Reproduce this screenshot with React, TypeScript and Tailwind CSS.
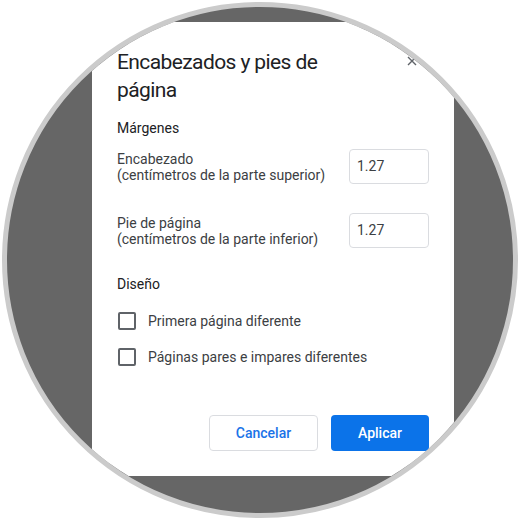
import React from "react";

function Checkbox() {
  return <div className="w-[18px] h-[18px] rounded-[2px] border-2 border-[#5f6368] bg-white shrink-0" />;
}

export default function App() {
  return (
    <div className="w-[520px] h-[520px] bg-white p-[2px]" style={{ fontFamily: "Roboto, 'Liberation Sans', sans-serif" }}>
      <div className="w-[516px] h-[516px] rounded-full border-[5px] border-[#cbcbcb] bg-[#666666] overflow-hidden">
        <div className="ml-[85px] mt-[15px] w-[362px] bg-white pt-[26px] pb-[25px] pl-[25px] pr-[25px] flex flex-col">
          <div className="flex items-start">
            <div className="flex-1 text-[21px] leading-[28px] tracking-[-0.6px] font-normal text-[#202124]">
              Encabezados y pies de
              <br />
              página
            </div>
            <div className="w-[24px] h-[24px] flex items-center justify-center mt-[1px] mr-[5px]">
              <svg width="10" height="10" viewBox="0 0 10 10">
                <path d="M1 1 L9 9 M9 1 L1 9" stroke="#5f6368" strokeWidth="1.4" fill="none" />
              </svg>
            </div>
          </div>
          <div className="mt-[14px] text-[14px] leading-[20px] font-normal text-[#202124]">Márgenes</div>
          <div className="mt-[11px] flex items-center justify-between h-[35px]">
            <div className="text-[14px] leading-[16px] text-[#3c4043]">
              Encabezado
              <br />
              (centímetros de la parte superior)
            </div>
            <div className="w-[80px] h-[35px] rounded-[4px] border border-[#dadce0] flex items-center pl-[7px] text-[14px] text-[#3c4043]">
              1.27
            </div>
          </div>
          <div className="mt-[29px] flex items-center justify-between h-[35px]">
            <div className="text-[14px] leading-[16px] text-[#3c4043]">
              Pie de página
              <br />
              (centímetros de la parte inferior)
            </div>
            <div className="w-[80px] h-[35px] rounded-[4px] border border-[#dadce0] flex items-center pl-[7px] text-[14px] text-[#3c4043]">
              1.27
            </div>
          </div>
          <div className="mt-[26px] text-[14px] leading-[20px] font-normal text-[#202124]">Diseño</div>
          <div className="mt-[17px] flex items-center h-[20px] gap-[12px] pl-[1px]">
            <Checkbox />
            <span className="text-[14px] leading-[20px] text-[#3c4043]">Primera página diferente</span>
          </div>
          <div className="mt-[16px] flex items-center h-[20px] gap-[12px] pl-[1px]">
            <Checkbox />
            <span className="text-[14px] leading-[20px] text-[#3c4043]">Páginas pares e impares diferentes</span>
          </div>
          <div className="mt-[48px] flex justify-end gap-[13px]">
            <button className="w-[109px] h-[36px] rounded-[4px] border border-[#dadce0] bg-white text-[#1a73e8] text-[14px] font-medium">
              Cancelar
            </button>
            <button className="w-[98px] h-[36px] rounded-[4px] bg-[#0b73e9] text-white text-[14px] font-medium">
              Aplicar
            </button>
          </div>
        </div>
      </div>
    </div>
  );
}
